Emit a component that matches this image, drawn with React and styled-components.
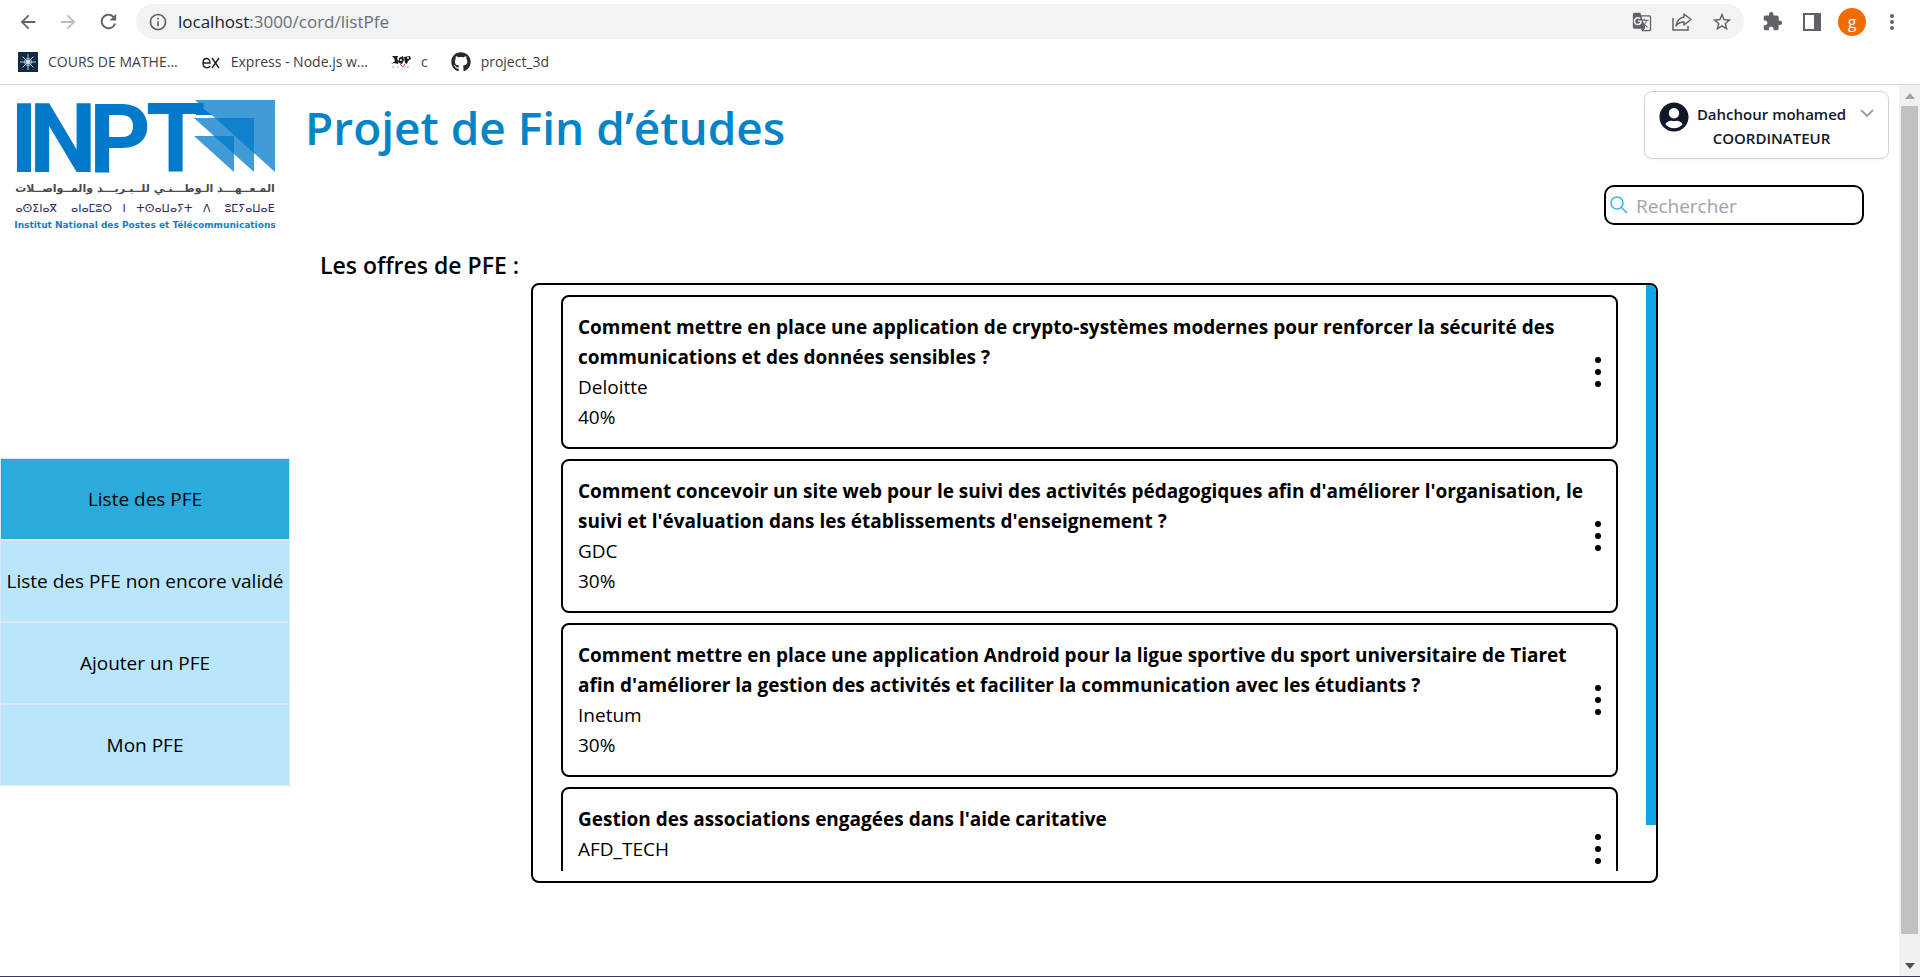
import React from "react";
import styled, { createGlobalStyle } from "styled-components";
import {
  MdArrowBack, MdArrowForward, MdRefresh, MdInfoOutline, MdStarBorder,
  MdExtension, MdMoreVert, MdGTranslate,
} from "react-icons/md";
import { FaGithub, FaUserCircle } from "react-icons/fa";

const GlobalStyle = createGlobalStyle`
  *, *::before, *::after { box-sizing: border-box; }
  body {
    margin: 0;
    background: #fff;
    color: #000;
    font-family: "Open Sans", "Noto Sans", sans-serif;
    font-size: 19px;
    line-height: 30px;
  }
  button, input { font: inherit; color: inherit; }
  button { padding: 0; border: 0; background: none; cursor: pointer; }
  h1, h2, h3, p, ul { margin: 0; padding: 0; }
  ul { list-style: none; }
`;

const Shell = styled.div`
  display: flex;
  flex-direction: column;
  min-height: 100vh;
  border-bottom: 1px solid #3f3a60;
`;

/* ---------- Browser chrome ---------- */

const Toolbar = styled.div`
  display: flex;
  align-items: center;
  gap: 16px;
  padding: 4px 16px;
`;

const IconButton = styled.button`
  display: grid;
  place-items: center;
  width: 24px;
  height: 24px;
  color: ${(p) => (p.$muted ? "#b9bbbe" : "#5f6368")};
  svg { display: block; }
`;

const AddressBar = styled.div`
  flex: 1;
  display: flex;
  align-items: center;
  gap: 16px;
  height: 35px;
  padding: 0 10px 0 12px;
  border-radius: 18px;
  background: #f1f3f4;
`;

const Address = styled.div`
  flex: 1;
  display: flex;
  align-items: center;
  gap: 10px;
`;

const Url = styled.div`
  color: #6b6f73;
  font-size: 17px;
  line-height: 24px;
  b { color: #202124; font-weight: 400; }
`;

const Profile = styled.button`
  width: 28px;
  height: 28px;
  margin: 0 -2px;
  border-radius: 50%;
  background: #ef6c00;
  color: #fff;
  font-size: 16px;
  line-height: 24px;
`;

const Bookmarks = styled.nav`
  display: flex;
  align-items: center;
  gap: 23px;
  height: 42px;
  padding: 0 18px 4px;
  border-bottom: 1px solid #d5d7da;
`;

const Bookmark = styled.a`
  display: flex;
  align-items: center;
  gap: 10px;
  color: #3c4043;
  font-size: 14px;
  line-height: 24px;
  text-decoration: none;
`;

/* ---------- Page ---------- */

const Viewport = styled.div`
  flex: 1;
  display: flex;
`;

const Page = styled.div`
  flex: 1;
  display: flex;
  min-width: 0;
`;

const Track = styled.div`
  display: flex;
  flex-direction: column;
  align-items: center;
  width: 21px;
  background: #f1f1f1;
`;

const TrackArrow = styled.button`
  display: grid;
  place-items: center;
  width: 21px;
  height: 21px;
`;

const TrackThumb = styled.div`
  flex: 1;
  width: 17px;
  margin-bottom: 21px;
  background: #c1c1c1;
`;

const Sidebar = styled.aside`
  display: flex;
  flex-direction: column;
  gap: 218px;
  width: 290px;
  padding-top: 10px;
`;

const Menu = styled.nav`
  display: flex;
  flex-direction: column;
`;

const MenuItem = styled.button`
  height: 82px;
  border: 1px solid #dbe9f3;
  background: ${(p) => (p.$active ? "#2aabdc" : "#b9e6fd")};
  white-space: nowrap;
`;

const Main = styled.main`
  flex: 1;
  display: flex;
  flex-direction: column;
  min-width: 0;
  padding: 6px 10px 0 15px;
`;

const Header = styled.header`
  display: flex;
  justify-content: space-between;
  align-items: flex-start;
`;

const Title = styled.h1`
  color: #0284c7;
  font-size: 46px;
  font-weight: 600;
  line-height: 72px;
`;

const UserCard = styled.button`
  display: flex;
  align-items: flex-start;
  gap: 6px;
  width: 245px;
  height: 68px;
  padding: 10px 14px;
  border: 1px solid #d1d5db;
  border-radius: 8px;
  color: #111827;
  font-size: 15px;
  font-weight: 600;
  line-height: 24px;
  box-shadow: 0 1px 2px rgba(0, 0, 0, 0.05);
`;

const UserName = styled.span`
  flex: 1;
  padding-right: 6px;
  text-align: center;
  white-space: nowrap;
`;

const Search = styled.label`
  align-self: flex-end;
  display: flex;
  align-items: center;
  gap: 8px;
  width: 260px;
  height: 40px;
  margin: 22px 25px 0 0;
  padding: 0 4px;
  border: 2px solid #000;
  border-radius: 10px;
`;

const SearchInput = styled.input`
  flex: 1;
  min-width: 0;
  padding: 2px 0 0;
  border: 0;
  outline: 0;
  background: none;
  &::placeholder { color: #9ca3af; opacity: 1; }
`;

const SectionTitle = styled.h2`
  margin: 22px 0 0 15px;
  font-size: 23px;
  font-weight: 600;
  line-height: 36px;
`;

const OfferBox = styled.section`
  display: flex;
  justify-content: space-between;
  align-items: flex-start;
  height: 600px;
  margin: 0 231px 0 226px;
  border: 2px solid #000;
  border-radius: 8px;
  overflow: hidden;
`;

const OfferList = styled.ul`
  flex: 1;
  display: flex;
  flex-direction: column;
  gap: 10px;
  height: 576px;
  margin: 10px 28px;
  overflow: hidden;
`;

const OfferThumb = styled.div`
  width: 10px;
  height: 540px;
  background: #0ea5e9;
`;

const Offer = styled.li`
  display: flex;
  align-items: center;
  justify-content: space-between;
  gap: 8px;
  flex-shrink: 0;
  padding: 15px 14px 15px 15px;
  border: 2px solid #000;
  border-radius: 8px;
`;

const OfferTitle = styled.h3`
  font-size: 19px;
  font-weight: 700;
  line-height: 30px;
`;

const MoreButton = styled.button`
  display: grid;
  place-items: center;
  flex-shrink: 0;
  width: 8px;
  height: 30px;
`;

const offers = [
  ["Comment mettre en place une application de crypto-systèmes modernes pour renforcer la sécurité des communications et des données sensibles ?", "Deloitte", "40%"],
  ["Comment concevoir un site web pour le suivi des activités pédagogiques afin d'améliorer l'organisation, le suivi et l'évaluation dans les établissements d'enseignement ?", "GDC", "30%"],
  ["Comment mettre en place une application Android pour la ligue sportive du sport universitaire de Tiaret afin d'améliorer la gestion des activités et faciliter la communication avec les étudiants ?", "Inetum", "30%"],
  ["Gestion des associations engagées dans l'aide caritative", "AFD_TECH", "0%"],
];

const menu = ["Liste des PFE", "Liste des PFE non encore validé", "Ajouter un PFE", "Mon PFE"];

function Logo() {
  return (
    <svg width="290" height="145" viewBox="0 0 290 145" role="img" aria-label="INPT">
      <text x="10 29 89 146" y="77" fontFamily="Roboto" fontWeight="700" fontSize="96" fill="#007ac9">INPT</text>
      <path d="M196 9H199L212 20H196Z" fill="#007ac9" />
      <g fill="#007ac9" fillOpacity="0.75">
        <path d="M195 5H275V77Z" />
        <path d="M194 23H254V77Z" />
        <path d="M194 41H234V77Z" />
      </g>
      <g textAnchor="middle">
        <text x="145" y="97" fontFamily="DejaVu Sans" fontWeight="700" fontSize="11" fill="#4a4a4a" direction="rtl">المـعــهـــد الـوطـــنـي للــبـريـــد والمــواصــلات</text>
        <text x="145" y="117" fontFamily="DejaVu Sans" fontSize="11" fill="#2b2a5a" xmlSpace="preserve">ⴰⵙⵉⵏⴰⴳ    ⴰⵏⴰⵎⵓⵔ   ⵏ   ⵜⵙⴰⵡⴰⵢⵜ   ⴷ    ⵓⵎⵢⴰⵡⴰⴹ</text>
        <text x="145" y="133" fontFamily="DejaVu Sans" fontWeight="700" fontSize="9" fill="#1480c4">Institut National des Postes et Télécommunications</text>
      </g>
    </svg>
  );
}

const CoursIcon = () => (
  <svg width="20" height="20" viewBox="0 0 20 20">
    <rect width="20" height="20" fill="#0f2a44" />
    <g stroke="#b9cbd9" strokeWidth="1" fill="none">
      <path d="M10 2V18M2 10H18M4.500 4.500L15.500 15.500M15.500 4.500L4.500 15.500" />
      <circle cx="10" cy="10" r="3.500" />
    </g>
    <circle cx="10" cy="10" r="2" fill="#dbe6ee" />
  </svg>
);

const ExpressIcon = () => (
  <svg width="20" height="20" viewBox="0 0 20 20" fill="none" stroke="#222" strokeWidth="1.400">
    <path d="M2 11H9C9 5 2 5 2 11C2 17 8 16.500 9 14M11 6L18 16M18 6L11 16" />
  </svg>
);

const CowIcon = () => (
  <svg width="20" height="20" viewBox="0 0 20 20">
    <path d="M1 4H7L6 7L8 9L7 12L3 11L0 12L4 9L3 6Z" fill="#1b1b1b" />
    <path d="M8 6L12 4L13 8L11 12L8 11Z" fill="#1b1b1b" />
    <path d="M13 5L19 4L20 7L17 9L16 12L14 11Z" fill="#1b1b1b" />
    <circle cx="17" cy="6" r="1" fill="#fff" />
    <circle cx="10" cy="8" r="1" fill="#fff" />
    <path d="M9 12L12 15L14 12" fill="none" stroke="#d14b4b" />
    <path d="M1 15H3M6 15H8M16 15H18" stroke="#aaa" />
  </svg>
);

const ShareIcon = () => (
  <svg width="22" height="22" viewBox="0 0 22 22" fill="none" stroke="#5f6368" strokeWidth="1.500">
    <path d="M2 7V19H17V15" />
    <path d="M13 3L20 8.500L13 14V11C9 11 7 12 5 15C6 10 8.500 6.500 13 6Z" strokeLinejoin="round" />
  </svg>
);

const PanelIcon = () => (
  <svg width="18" height="18" viewBox="0 0 18 18">
    <path d="M0 0H18V18H0ZM2 2V16H11V2Z" fill="#5f6368" fillRule="evenodd" />
  </svg>
);

export default function App() {
  return (
    <>
      <GlobalStyle />
      <Shell>
        <Toolbar>
          <IconButton aria-label="Précédent"><MdArrowBack size={22} /></IconButton>
          <IconButton $muted aria-label="Suivant"><MdArrowForward size={22} /></IconButton>
          <IconButton aria-label="Actualiser"><MdRefresh size={23} /></IconButton>
          <AddressBar>
            <Address>
              <MdInfoOutline size={20} color="#5f6368" />
              <Url><b>localhost</b>:3000/cord/listPfe</Url>
            </Address>
            <IconButton aria-label="Traduire"><MdGTranslate size={20} /></IconButton>
            <IconButton aria-label="Partager"><ShareIcon /></IconButton>
            <IconButton aria-label="Favori"><MdStarBorder size={22} /></IconButton>
          </AddressBar>
          <IconButton aria-label="Extensions"><MdExtension size={21} /></IconButton>
          <IconButton aria-label="Panneau"><PanelIcon /></IconButton>
          <Profile>g</Profile>
          <IconButton aria-label="Menu"><MdMoreVert size={24} /></IconButton>
        </Toolbar>
        <Bookmarks>
          <Bookmark href="#cours"><CoursIcon />COURS DE MATHE...</Bookmark>
          <Bookmark href="#express"><ExpressIcon />Express - Node.js w...</Bookmark>
          <Bookmark href="#c"><CowIcon />c</Bookmark>
          <Bookmark href="#project"><FaGithub size={20} color="#24292f" />project_3d</Bookmark>
        </Bookmarks>
        <Viewport>
          <Page>
            <Sidebar>
              <Logo />
              <Menu>
                {menu.map((label, i) => (
                  <MenuItem key={label} $active={i === 0}>{label}</MenuItem>
                ))}
              </Menu>
            </Sidebar>
            <Main>
              <Header>
                <Title>Projet de Fin d’études</Title>
                <UserCard>
                  <FaUserCircle size={30} />
                  <UserName>Dahchour mohamed<br />COORDINATEUR</UserName>
                  <svg width="14" height="24" viewBox="0 0 14 24" fill="none" stroke="#9ca3af" strokeWidth="2"><path d="M1 8L7 14L13 8" /></svg>
                </UserCard>
              </Header>
              <Search>
                <svg width="18" height="18" viewBox="0 0 18 18" fill="none" stroke="#38b6ea" strokeWidth="1.500"><circle cx="7" cy="7" r="6" /><path d="M11.500 11.500L17 17" /></svg>
                <SearchInput type="search" placeholder="Rechercher" />
              </Search>
              <SectionTitle>Les offres de PFE :</SectionTitle>
              <OfferBox>
                <OfferList>
                  {offers.map(([title, company, rate]) => (
                    <Offer key={title}>
                      <div>
                        <OfferTitle>{title}</OfferTitle>
                        <p>{company}</p>
                        <p>{rate}</p>
                      </div>
                      <MoreButton aria-label="Options">
                        <svg width="6" height="30" viewBox="0 0 6 30"><circle cx="3" cy="3" r="3" /><circle cx="3" cy="15" r="3" /><circle cx="3" cy="27" r="3" /></svg>
                      </MoreButton>
                    </Offer>
                  ))}
                </OfferList>
                <OfferThumb />
              </OfferBox>
            </Main>
          </Page>
          <Track>
            <TrackArrow aria-label="Haut"><svg width="10" height="6"><path d="M0 6L5 0L10 6Z" fill="#a3a3a3" /></svg></TrackArrow>
            <TrackThumb />
            <TrackArrow aria-label="Bas"><svg width="10" height="6"><path d="M0 0L5 6L10 0Z" fill="#505050" /></svg></TrackArrow>
          </Track>
        </Viewport>
      </Shell>
    </>
  );
}
